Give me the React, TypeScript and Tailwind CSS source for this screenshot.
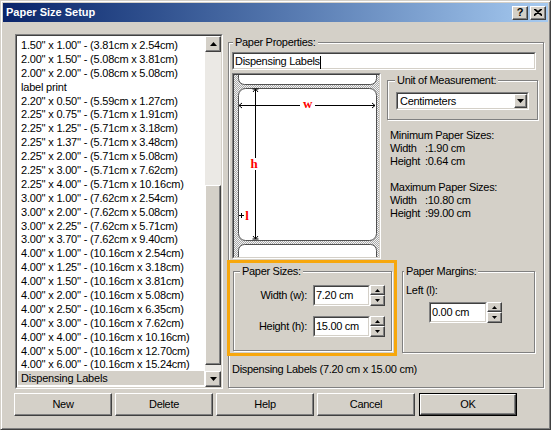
import React from "react";

const raised =
  "bg-[#d4d0c8] border border-t-white border-l-white border-r-[#404040] border-b-[#404040] shadow-[inset_-1px_-1px_0_#808080,inset_1px_1px_0_#d4d0c8]";
const sunken =
  "border border-t-[#808080] border-l-[#808080] border-r-white border-b-white";
const sunkenInner =
  "border border-t-[#404040] border-l-[#404040] border-r-[#d4d0c8] border-b-[#d4d0c8]";

const paperSizes = [
  "1.50'' x 1.00'' - (3.81cm x 2.54cm)",
  "2.00'' x 1.50'' - (5.08cm x 3.81cm)",
  "2.00'' x 2.00'' - (5.08cm x 5.08cm)",
  "label print",
  "2.20'' x 0.50'' - (5.59cm x 1.27cm)",
  "2.25'' x 0.75'' - (5.71cm x 1.91cm)",
  "2.25'' x 1.25'' - (5.71cm x 3.18cm)",
  "2.25'' x 1.37'' - (5.71cm x 3.48cm)",
  "2.25'' x 2.00'' - (5.71cm x 5.08cm)",
  "2.25'' x 3.00'' - (5.71cm x 7.62cm)",
  "2.25'' x 4.00'' - (5.71cm x 10.16cm)",
  "3.00'' x 1.00'' - (7.62cm x 2.54cm)",
  "3.00'' x 2.00'' - (7.62cm x 5.08cm)",
  "3.00'' x 2.25'' - (7.62cm x 5.71cm)",
  "3.00'' x 3.70'' - (7.62cm x 9.40cm)",
  "4.00'' x 1.00'' - (10.16cm x 2.54cm)",
  "4.00'' x 1.25'' - (10.16cm x 3.18cm)",
  "4.00'' x 1.50'' - (10.16cm x 3.81cm)",
  "4.00'' x 2.00'' - (10.16cm x 5.08cm)",
  "4.00'' x 2.50'' - (10.16cm x 6.35cm)",
  "4.00'' x 3.00'' - (10.16cm x 7.62cm)",
  "4.00'' x 4.00'' - (10.16cm x 10.16cm)",
  "4.00'' x 5.00'' - (10.16cm x 12.70cm)",
  "4.00'' x 6.00'' - (10.16cm x 15.24cm)",
  "Dispensing Labels",
];

const Arrow = ({ dir, size = 7 }: { dir: "up" | "down"; size?: number }) => (
  <svg width={size} height={Math.ceil(size / 2)} viewBox="0 0 7 4">
    {dir === "up" ? (
      <polygon points="3.5,0 7,4 0,4" fill="#000" />
    ) : (
      <polygon points="0,0 7,0 3.5,4" fill="#000" />
    )}
  </svg>
);

const Group = ({
  label,
  labelLeft,
  className,
  children,
}: {
  label: string;
  labelLeft: string;
  className: string;
  children?: React.ReactNode;
}) => (
  <div
    className={`relative border border-[#808080] shadow-[inset_1px_1px_0_#fff,1px_1px_0_#fff] ${className}`}
  >
    <span
      className={`absolute top-[-7px] ${labelLeft} bg-[#d4d0c8] px-[2px] leading-[13px] whitespace-nowrap`}
    >
      {label}
    </span>
    {children}
  </div>
);

const Spinner = ({ value, width }: { value: string; width: string }) => (
  <div className="flex h-[21px]">
    <div className={`${width} h-full bg-white ${sunken}`}>
      <div className={`h-full ${sunkenInner} pl-[1px] leading-[17px]`}>{value}</div>
    </div>
    <div className="w-[15px] flex flex-col">
      <div className={`h-[10px] flex items-center justify-center ${raised}`}>
        <Arrow dir="up" size={5} />
      </div>
      <div className={`h-[11px] flex items-center justify-center ${raised}`}>
        <Arrow dir="down" size={5} />
      </div>
    </div>
  </div>
);

const PaperDiagram = () => (
  <div className={`w-[149px] h-[186px] ${sunken}`}>
    <div className={`w-full h-full ${sunkenInner} overflow-hidden`}>
      <svg width="145" height="182" viewBox="0 0 145 182">
        <defs>
          <pattern id="hatch" width="2" height="2" patternUnits="userSpaceOnUse">
            <rect width="2" height="2" fill="#f4f4f4" />
            <rect width="1" height="1" fill="#a8a8a8" />
            <rect x="1" y="1" width="1" height="1" fill="#a8a8a8" />
          </pattern>
        </defs>
        <rect width="145" height="182" fill="url(#hatch)" />
        <rect x="4.5" y="-8" width="138" height="17.5" rx="6" fill="#fff" stroke="#505050" />
        <rect x="4.5" y="13.5" width="138" height="152" rx="7" fill="#fff" stroke="#505050" />
        <rect x="4.5" y="169.5" width="138" height="30" rx="6" fill="#fff" stroke="#505050" />
        {/* width arrow */}
        <line x1="5" y1="30.5" x2="66" y2="30.5" stroke="#000" />
        <line x1="81" y1="30.5" x2="141" y2="30.5" stroke="#000" />
        <polyline points="8,28 5,30.5 8,33" fill="none" stroke="#000" />
        <polyline points="138,28 141,30.5 138,33" fill="none" stroke="#000" />
        <text x="73.5" y="33" textAnchor="middle" fill="#ff0000" fontSize="13" fontWeight="bold" fontFamily="'Liberation Serif', serif">
          w
        </text>
        {/* height arrow */}
        <line x1="21.5" y1="14" x2="21.5" y2="83" stroke="#000" />
        <line x1="21.5" y1="95" x2="21.5" y2="164" stroke="#000" />
        <polyline points="19,17 21.5,14 24,17" fill="none" stroke="#000" />
        <polyline points="19,161 21.5,164 24,161" fill="none" stroke="#000" />
        <line x1="18.5" y1="14" x2="24.5" y2="14" stroke="#000" />
        <line x1="18.5" y1="164" x2="24.5" y2="164" stroke="#000" />
        <text x="20" y="93" textAnchor="middle" fill="#ff0000" fontSize="13" fontWeight="bold" fontFamily="'Liberation Serif', serif">
          h
        </text>
        {/* left margin */}
        <line x1="5" y1="140.5" x2="10" y2="140.5" stroke="#000" />
        <line x1="7.5" y1="138" x2="7.5" y2="143" stroke="#000" />
        <text x="13" y="144.5" textAnchor="middle" fill="#ff0000" fontSize="13" fontWeight="bold" fontFamily="'Liberation Serif', serif">
          l
        </text>
      </svg>
    </div>
  </div>
);

export default function App() {
  return (
    <div className="w-[551px] h-[430px] font-['Liberation_Sans',Arial,sans-serif] text-[11px] tracking-[-0.3px] text-black">
      <div className="w-full h-full bg-[#d4d0c8] border border-t-[#d4d0c8] border-l-[#d4d0c8] border-r-[#404040] border-b-[#404040] shadow-[inset_1px_1px_0_#fff,inset_-1px_-1px_0_#808080] p-[2px] flex flex-col">
        {/* title bar */}
        <div className="h-[19px] flex items-center bg-gradient-to-r from-[#0a246a] to-[#a6caf0] pl-[3px] pr-[2px]">
          <span className="text-white font-bold tracking-normal flex-1">Paper Size Setup</span>
          <div className={`w-[16px] h-[14px] flex items-center justify-center ${raised} font-bold text-[11px] leading-none`}>
            ?
          </div>
          <div className={`w-[16px] h-[14px] ml-[2px] flex items-center justify-center ${raised}`}>
            <svg width="8" height="7" viewBox="0 0 8 7">
              <path d="M0 0 L8 7 M1 0 L8 6 M8 0 L0 7 M7 0 L0 6" stroke="#000" strokeWidth="1.1" />
            </svg>
          </div>
        </div>

        <div className="flex items-start">
          {/* list box */}
          <div className={`ml-[12px] mt-[12px] w-[208px] h-[355px] ${sunken}`}>
            <div className={`w-full h-full ${sunkenInner} flex`}>
              <div className="flex-1 bg-white pt-[2px] overflow-hidden tracking-[-0.2px]">
                {paperSizes.map((s) => (
                  <div
                    key={s}
                    className={`h-[13.9px] leading-[14px] pl-[3px] mx-[1px] whitespace-nowrap ${
                      s === "Dispensing Labels" ? "bg-[#d4d0c8]" : ""
                    }`}
                  >
                    {s}
                  </div>
                ))}
              </div>
              <div className="w-[16px] flex flex-col bg-[#ebe9e5]">
                <div className={`h-[16px] flex items-center justify-center ${raised}`}>
                  <Arrow dir="up" />
                </div>
                <div className="flex-1">
                  <div className={`mt-[133px] h-[180px] ${raised}`} />
                </div>
                <div className={`h-[16px] flex items-center justify-center ${raised}`}>
                  <Arrow dir="down" />
                </div>
              </div>
            </div>
          </div>

          {/* paper properties */}
          <Group label="Paper Properties:" labelLeft="left-[4px]" className="ml-[5px] mt-[20px] w-[316px] h-[346px]">
            <div className={`ml-[3px] mt-[9px] w-[304px] h-[18px] bg-white ${sunken}`}>
              <div className={`h-full ${sunkenInner} pl-[1px] leading-[15px]`}>
                Dispensing Labels<span className="inline-block w-[1px] h-[13px] bg-black align-middle" />
              </div>
            </div>

            <div className="flex ml-[3px] mt-[3px]">
              <PaperDiagram />
              <div className="ml-[6px]">
                <Group label="Unit of Measurement:" labelLeft="left-[7px]" className="mt-[7px] w-[151px] h-[40px]">
                  <div className={`ml-[8px] mt-[11px] w-[133px] h-[18px] bg-white ${sunken}`}>
                    <div className={`h-full ${sunkenInner} flex`}>
                      <span className="flex-1 pl-[2px] leading-[15px]">Centimeters</span>
                      <div className={`w-[13px] h-full flex items-center justify-center ${raised}`}>
                        <Arrow dir="down" />
                      </div>
                    </div>
                  </div>
                </Group>
                <div className="ml-[3px] mt-[9px] leading-[13px]">
                  <div>Minimum Paper Sizes:</div>
                  <div>
                    <span className="inline-block w-[35px]">Width</span>:1.90 cm
                  </div>
                  <div>
                    <span className="inline-block w-[35px]">Height</span>:0.64 cm
                  </div>
                  <div className="mt-[13px]">Maximum Paper Sizes:</div>
                  <div>
                    <span className="inline-block w-[35px]">Width</span>:10.80 cm
                  </div>
                  <div>
                    <span className="inline-block w-[35px]">Height</span>:99.00 cm
                  </div>
                </div>
              </div>
            </div>

            <div className="flex items-start ml-[4px] mt-[12px]">
              <Group label="Paper Sizes:" labelLeft="left-[6px]" className="w-[159px] h-[80px]">
                <div className="mt-[13px] flex items-center">
                  <span className="w-[73px] text-right">Width (w):</span>
                  <div className="ml-[6px]">
                    <Spinner value="7.20 cm" width="w-[57px]" />
                  </div>
                </div>
                <div className="mt-[10px] flex items-center">
                  <span className="w-[73px] text-right">Height (h):</span>
                  <div className="ml-[6px]">
                    <Spinner value="15.00 cm" width="w-[57px]" />
                  </div>
                </div>
              </Group>
              <Group label="Paper Margins:" labelLeft="left-[1px]" className="ml-[10px] w-[133px] h-[82px]">
                <div className="ml-[3px] mt-[12px] leading-[13px]">Left (l):</div>
                <div className="ml-[26px] mt-[5px]">
                  <Spinner value="0.00 cm" width="w-[58px]" />
                </div>
              </Group>
            </div>

            <div className="ml-[3px] mt-[10px] leading-[13px]">Dispensing Labels (7.20 cm x 15.00 cm)</div>

            {/* highlight annotation */}
            <div className="absolute left-[-2px] top-[217px] w-[170px] h-[96px] border-[3px] border-[#f7a70c]" />
          </Group>
        </div>

        {/* buttons */}
        <div className="flex gap-[3px] ml-[11px] mt-[4px]">
          {["New", "Delete", "Help", "Cancel"].map((b) => (
            <div key={b} className={`w-[98px] h-[23px] flex items-center justify-center ${raised}`}>
              {b}
            </div>
          ))}
          <div className="ml-[1px] w-[98px] h-[23px] border border-black">
            <div className={`w-full h-full flex items-center justify-center ${raised}`}>OK</div>
          </div>
        </div>
      </div>
    </div>
  );
}
